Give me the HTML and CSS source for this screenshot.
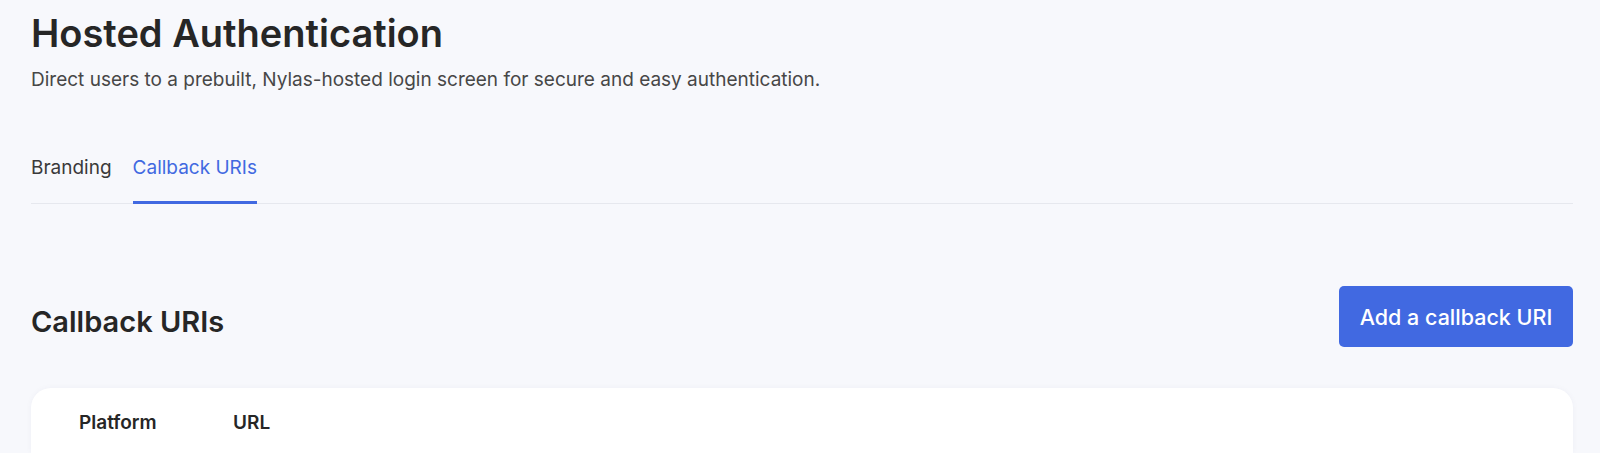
FILE: index.html
```html
<!DOCTYPE html>
<html lang="en">
<head>
<meta charset="utf-8">
<title>Hosted Authentication</title>
<link rel="stylesheet" href="styles.css">
</head>
<body>
<main class="page">
  <header class="page-header">
    <h1 class="page-title">Hosted Authentication</h1>
    <p class="page-desc">Direct users to a prebuilt, Nylas-hosted login screen for secure and easy authentication.</p>
  </header>
  <nav class="tabs">
    <a class="tab">Branding</a>
    <a class="tab tab-active">Callback URIs</a>
  </nav>
  <section class="section">
    <div class="section-head">
      <h2 class="section-title">Callback URIs</h2>
      <button class="btn-primary">Add a callback URI</button>
    </div>
    <div class="card">
      <div class="table-head">
        <span class="col col-platform">Platform</span>
        <span class="col col-url">URL</span>
      </div>
    </div>
  </section>
</main>
</body>
</html>
```

FILE: styles.css
```css
* { box-sizing: border-box; }
html, body { margin: 0; padding: 0; }
body {
  background: #f7f8fc;
  font-family: Inter, "Open Sans", sans-serif;
  color: #262626;
  height: 453px;
  overflow: hidden;
}
.page {
  padding: 0 27px 0 31px;
}
.page-header { padding-top: 9px; }
.page-title {
  margin: 0;
  font-size: 38px;
  line-height: 48px;
  font-weight: 600;
  color: #262626;
}
.page-desc {
  margin: 9px 0 0;
  font-size: 19px;
  line-height: 28px;
  color: #474747;
}
.tabs {
  margin-top: 54px;
  display: flex;
  gap: 21px;
  border-bottom: 1px solid #e6e8ee;
}
.tab {
  font-size: 19px;
  line-height: 28px;
  padding: 6px 0 19px;
  color: #3a3a3a;
  border-bottom: 3px solid transparent;
  margin-bottom: -1px;
}
.tab-active {
  color: #4169e1;
  border-bottom-color: #4169e1;
}
.section { margin-top: 82px; }
.section-head {
  display: flex;
  justify-content: space-between;
  align-items: flex-end;
}
.section-title {
  margin: 0 0 7px;
  font-size: 29px;
  line-height: 36px;
  font-weight: 600;
  color: #262626;
}
.btn-primary {
  width: 234px;
  height: 61px;
  border: none;
  border-radius: 5px;
  background: #4169e1;
  color: #ffffff;
  font-family: inherit;
  font-size: 21.5px;
  font-weight: 500;
}
.card {
  margin-top: 41px;
  background: #ffffff;
  border-radius: 20px 20px 0 0;
  height: 65px;
  box-shadow: 0 0 6px rgba(30, 40, 90, 0.04);
}
.table-head {
  display: flex;
  padding: 21px 0 0 48px;
  font-size: 19px;
  line-height: 28px;
  font-weight: 600;
  color: #262626;
}
.col-platform { width: 154px; }
```
